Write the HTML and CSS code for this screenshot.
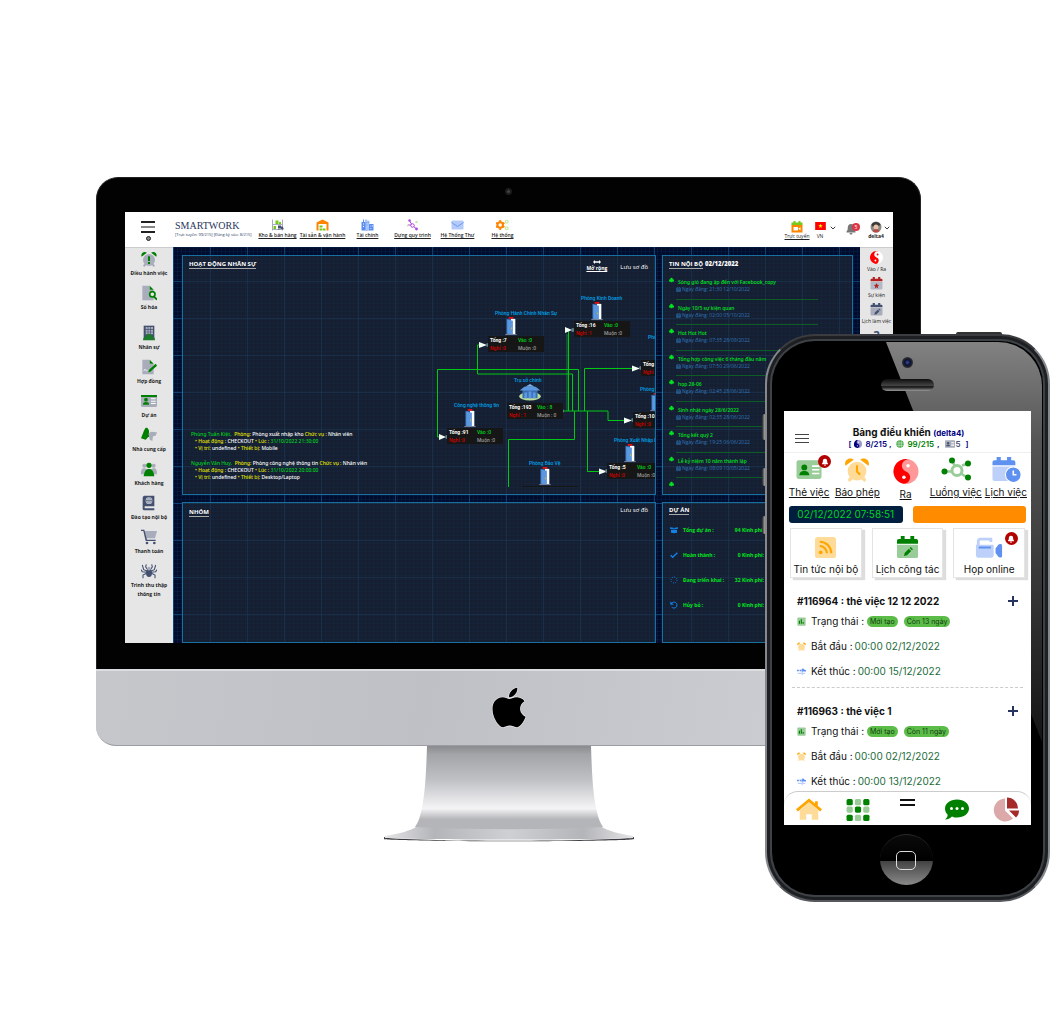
FILE: index.html
```html
<!DOCTYPE html>
<html lang="vi">
<head>
<meta charset="utf-8">
<meta name="viewport" content="width=device-width, initial-scale=1">
<title>Smartwork</title>
<link rel="stylesheet" href="styles.css">
</head>
<body>
<svg class="sprite" aria-hidden="true">
  <symbol id="i-alarm" viewBox="0 0 24 24"><circle class="alt" cx="12" cy="13.5" r="9"/><path class="alt" d="M5 19l3 2-3 3-2-2zM19 19l-3 2 3 3 2-2z"/><path d="M1 8.500C-.5 5 2 1.500 5.500 1.500c1.500 0 2.500.5 3.300 1.200zM23 8.500C24.500 5 22 1.500 18.500 1.500c-1.500 0-2.500.5-3.300 1.200z"/></symbol>
  <symbol id="i-file" viewBox="0 0 24 24"><path class="alt" d="M2 1h11v6h6v16H2z"/><path d="M13 1l6 6h-6z"/></symbol>
  <symbol id="i-build" viewBox="0 0 24 24"><path class="alt" d="M4 1h16v21H4z"/><path fill="#a9adbb" d="M7 3h3v3H7zM11 3h3v3h-3zM15 3h3v3h-3zM7 7h3v3H7zM11 7h3v3h-3zM15 7h3v3h-3zM7 11h3v3H7zM11 11h3v3h-3zM15 11h3v3h-3z"/><path d="M3 23c0-4 3-6 5-6a4 4 0 0 1 8 0c3 0 5 2 5 6z"/></symbol>
  <symbol id="i-card" viewBox="0 0 24 24"><rect class="alt" y="3" width="24" height="18" rx="2"/><circle cx="7.500" cy="10" r="2.800"/><path d="M2.800 17.500c0-3 2-4 4.700-4s4.700 1 4.700 4z"/><path fill="#fff" d="M15 8h7v1.500h-7zM15 11.500h7V13h-7zM15 15h7v1.500h-7z"/></symbol>
  <symbol id="i-people" viewBox="0 0 24 24"><circle class="alt" cx="5" cy="7" r="3"/><circle class="alt" cx="19" cy="7" r="3"/><path class="alt" d="M0 20c0-6 1-9 5-9s5 3 5 9zM14 20c0-6 1-9 5-9s5 3 5 9z"/><circle cx="12" cy="6.500" r="4"/><path d="M4 23c1-7 3-11 8-11s7 4 8 11z"/></symbol>
  <symbol id="i-hands" viewBox="0 0 24 24"><path d="M0 17L5 4l4-3 3 4v9l-5 5z"/><path class="alt" d="M11 10l4-3 9 1-2 5-4 1-1 7-4-2-1-6z"/><circle cx="8" cy="3" r="2"/></symbol>
  <symbol id="i-book" viewBox="0 0 24 24"><path d="M5 1h15v16H5.500v3H20v3H5a2.500 2.500 0 0 1-2.500-2.500V4A3 3 0 0 1 5 1z"/><circle cx="12" cy="8.500" r="5" fill="#dfe2e8"/><path fill="none" stroke="#435070" d="M7 8.500h10M12 3.500v10M9.500 4.500c-1 3-1 5 0 8M14.500 4.500c1 3 1 5 0 8"/></symbol>
  <symbol id="i-cart" viewBox="0 0 24 24"><path class="alt" d="M5 3h19l-3 11H8z"/><path d="M0 1h5l4 15h13v2H7L3.500 3H0z"/><circle cx="9" cy="21" r="2"/><circle cx="20" cy="21" r="2"/></symbol>
  <symbol id="i-spider" viewBox="0 0 24 24"><path fill="none" stroke="currentColor" stroke-width="1.600" d="M9 12L4 10 2 3M15 12l5-2 2-7M9 14l-7-1-2-3M15 14l7-1 2-3M9 15l-6 3v5M15 15l6 3v5M10 10L7 6l1-4M14 10l3-4-1-4"/><ellipse cx="12" cy="15" rx="4.500" ry="6"/><circle class="alt" cx="12" cy="8.500" r="2.700"/></symbol>
  <symbol id="i-yin" viewBox="0 0 24 24"><circle class="alt" cx="12" cy="12" r="12"/><path d="M12 0a12 12 0 1 0 0 24 6 6 0 0 0 0-12 6 6 0 0 1 0-12z" transform="rotate(20 12 12)"/><circle cx="14" cy="6.500" r="1.700" fill="var(--hole,#fff)"/><circle cx="10" cy="17.500" r="1.700" fill="#fff"/></symbol>
  <symbol id="i-cal" viewBox="0 0 24 24"><path class="alt" d="M1 9h22v12a2 2 0 0 1-2 2H3a2 2 0 0 1-2-2z"/><path d="M1 8V5a2 2 0 0 1 2-2h2V0h4v3h6V0h4v3h2a2 2 0 0 1 2 2v3z"/></symbol>
  <symbol id="i-pen" viewBox="0 0 24 24"><path d="M6 22l1.500-6 8-8 4.500 4.500-8 8zM17 6.500l2-2 4.500 4.500-2 2z"/></symbol>
  <symbol id="i-star" viewBox="0 0 24 24"><path d="M12 2l3 7 7 .5-5.500 4.700L18.500 22 12 18l-6.500 4 2-7.800L2 9.500 9 9z"/></symbol>
  <symbol id="i-bell" viewBox="0 0 24 24"><path d="M12 2c5 0 6.500 4 6.500 8 0 4 1 5 2.500 7v2H3v-2c1.500-2 2.500-3 2.500-7 0-4 1.500-8 6.500-8zM9 20h6a3 3 0 0 1-6 0z"/></symbol>
  <symbol id="i-chev" viewBox="0 0 24 24"><path fill="none" stroke="currentColor" stroke-width="3.500" d="M3 7l9 9 9-9"/></symbol>
  <symbol id="i-club" viewBox="0 0 24 24"><circle cx="12" cy="7" r="6"/><circle cx="6" cy="14" r="6"/><circle cx="18" cy="14" r="6"/><path d="M10 12h4l2 11H8z"/></symbol>
  <symbol id="i-calo" viewBox="0 0 24 24"><path fill="none" stroke="currentColor" stroke-width="2.500" d="M2 5h20v17H2zM2 10h20M7 1v5M17 1v5M8.500 10v12M15.500 10v12M2 16h20"/></symbol>
  <symbol id="i-net" viewBox="0 0 30 24"><path class="altline" fill="none" stroke-width="2.500" d="M11 3l3 6M21 8l6-2M20 16l6 4M11 14H4"/><circle class="altline" fill="none" stroke-width="3" cx="16" cy="13" r="5"/><circle cx="11" cy="3" r="3"/><circle cx="27" cy="6" r="3"/><circle cx="27" cy="20" r="3"/><circle cx="3.500" cy="14" r="3"/></symbol>
  <symbol id="i-door" viewBox="0 0 12 20"><path fill="#e10f0f" d="M3.500 0h5v2h-5z"/><path fill="#2f5f9c" d="M1 2h9.500v16H1z"/><path fill="#fff" d="M6 2h4.500v16H6z"/><path fill="#5c98df" d="M2 2.500l6 1.500v14.500l-6-1z"/><path fill="#d8b43a" d="M6 11h1v2H6z"/><path fill="#7f8aa0" d="M0 18h12v1H0z"/></symbol>
  <symbol id="i-house" viewBox="0 0 24 18"><ellipse cx="12" cy="13" rx="11.500" ry="4.500" fill="#b9dc9a"/><path fill="#3a6db0" d="M4 6h16v9H4z"/><path fill="#5c98df" d="M1 7l5-4h12l5 4zM6 9h3v6H6zM10.500 8h3v7h-3zM15 9h3v6h-3z"/><path fill="#79aee8" d="M7 3l5-3 5 3z"/></symbol>
  <symbol id="i-shelf" viewBox="0 0 24 24"><path fill="none" stroke="#a9adbb" stroke-width="2" d="M2 1v22M22 1v22M1 11h22M1 21h15"/><path fill="#76c81c" d="M8 3h6v7H8zM4 14h5v6H4zM15 6h4v4h-4z"/><path fill="#435070" d="M13 13h6v6h-6zM19 15h3l2 3v3H13v-1h6z"/></symbol>
  <symbol id="i-ware" viewBox="0 0 24 24"><path fill="#ff8400" d="M0 7l12-6 12 6v16h-4V10H4v13H0z"/><path fill="#76c81c" d="M6 13h6v4H6zM6 19h6v4H6zM13 19h5v4h-5z"/></symbol>
  <symbol id="i-city" viewBox="0 0 24 24"><path fill="#5b8def" d="M0 6h3V1h2v5h3V1h2v5h4v17H0z"/><path fill="#a9c5fb" d="M8 3h8v20H8z"/><path fill="#5b8def" d="M15 10h9v13h-9zM10 6h1.500v2H10zM13 6h1.500v2H13zM10 11h1.500v2H10z"/><path fill="#fff" d="M3 9h2v2H3zM3 14h2v2H3zM18 13h1.500v2H18zM21 13h1.500v2H21zM18 18h1.500v2H18z"/></symbol>
  <symbol id="i-flow" viewBox="0 0 24 24"><path fill="none" stroke="#b146e0" stroke-width="2" d="M6 3l5 9 9 8M11 12H3"/><circle cx="6" cy="3" r="2.500" fill="#b146e0"/><circle cx="12" cy="13" r="3.500" fill="#fff" stroke="#b146e0" stroke-width="2"/><circle cx="20" cy="20" r="2.800" fill="#b146e0"/><circle cx="2.500" cy="13" r="2" fill="#c4e8a5"/><circle cx="20" cy="6" r="2.500" fill="#c4e8a5"/></symbol>
  <symbol id="i-mail" viewBox="0 0 24 24"><rect y="3" width="24" height="18" rx="2" fill="#b4cbfa"/><path fill="none" stroke="#6d9af4" stroke-width="2" d="M0 7l12 8 12-8"/></symbol>
  <symbol id="i-gear" viewBox="0 0 28 24"><circle cx="9" cy="12" r="6" fill="none" stroke="#ff8400" stroke-width="4.500"/><path stroke="#ff8400" stroke-width="4" d="M9 1v4M9 19v4M0 7l3 2M18 7l-3 2M0 17l3-2M18 17l-3-2"/><g fill="none" stroke="#c4e8a5" stroke-width="2.500"><circle cx="23" cy="5" r="3"/><circle cx="23" cy="19" r="3"/></g></symbol>
  <symbol id="i-box" viewBox="0 0 24 24"><path d="M0 4l10 1 2 3 2-3 10-1v4l-9 2-3-2-3 2-9-2zM3 11l6 1 3-2 3 2 6-1v9l-9 2-9-2z"/></symbol>
</svg>

<main class="stage">
  <section class="monitor" aria-label="Smartwork desktop">
    <div class="bezel">
      <span class="webcam"></span>
      <div class="screen">
        <header class="topbar">
          <button class="burger" aria-label="Menu"><i></i><i></i><i></i><b></b></button>
          <div class="brand"><strong>SMARTWORK</strong><small>[Trực tuyến: 99/215] [Đăng ký vào: 8/215]</small></div>
          <nav class="topnav">
            <a href="#"><svg><use href="#i-shelf"/></svg>Kho &amp; bán hàng</a>
            <a href="#"><svg><use href="#i-ware"/></svg>Tài sản &amp; vận hành</a>
            <a href="#"><svg><use href="#i-city"/></svg>Tài chính</a>
            <a href="#"><svg><use href="#i-flow"/></svg>Dựng quy trình</a>
            <a href="#"><svg><use href="#i-mail"/></svg>Hệ Thống Thư</a>
            <a href="#"><svg><use href="#i-gear"/></svg>Hệ thống</a>
          </nav>
          <div class="tools">
            <a class="tool online" href="#"><svg viewBox="0 0 24 24"><path fill="#76c81c" d="M1 9V3h4V0h4v3h6V0h4v3h4v6z"/><path fill="#ff8400" d="M1 8h22v15H1z"/><path fill="#fff" d="M5 12h9v7H5zM15 15l4-3v7l-4-3z"/></svg>Trực tuyến</a>
            <div class="tool flag"><svg viewBox="0 0 24 18"><path fill="#f00" d="M0 0h24v18H0z"/><path fill="#ff0" d="M12 4l1.300 3.500H17l-3 2.300 1.100 3.700-3.100-2.200-3.100 2.200L10 9.800 7 7.500h3.700z"/></svg>VN</div>
            <svg class="chev"><use href="#i-chev"/></svg>
            <div class="alerts"><svg><use href="#i-bell"/></svg><span>5</span></div>
            <div class="tool user"><svg viewBox="0 0 24 24"><circle cx="12" cy="12" r="11" fill="#8c8984"/><path fill="#3b3937" d="M3 8c2-8 16-8 18 0l-4 2-5-2-6 4z"/><circle cx="12" cy="12" r="5" fill="#e6c3a8"/><path fill="#b84b45" d="M5 20c2-5 12-5 14 0-4 4-10 4-14 0z"/></svg>delta4</div>
            <svg class="chev"><use href="#i-chev"/></svg>
          </div>
        </header>

        <div class="workspace">
          <nav class="rail left">
            <a href="#"><svg viewBox="0 0 24 24"><use href="#i-alarm"/><path d="M10.500 8h3v7h-3zM10.500 16.500h3v3h-3z"/></svg>Điều hành việc</a>
            <a href="#"><svg viewBox="0 0 24 24"><use href="#i-file"/><circle cx="17" cy="14" r="4" fill="#e6e6e6" stroke="currentColor" stroke-width="2.500"/><path stroke="currentColor" stroke-width="3" d="M19 17l5 5"/></svg>Số hóa</a>
            <a class="apart navy" href="#"><svg><use href="#i-build"/></svg>Nhân sự</a>
            <a href="#"><svg viewBox="0 0 24 24"><use href="#i-file"/><path d="M11 20l1-4 10-9 2 3-10 9z"/><path stroke="#fff" fill="none" d="M4 18l2-3 2 3 2-1"/></svg>Hợp đồng</a>
            <a href="#"><svg viewBox="0 0 24 24"><use href="#i-card"/><path d="M0 3h24v3H0z"/></svg>Dự án</a>
            <a href="#"><svg><use href="#i-hands"/></svg>Nhà cung cấp</a>
            <a href="#"><svg><use href="#i-people"/></svg>Khách hàng</a>
            <a class="slate" href="#"><svg><use href="#i-book"/></svg>Đào tạo nội bộ</a>
            <a class="slate" href="#"><svg><use href="#i-cart"/></svg>Thanh toán</a>
            <a class="slate" href="#"><svg><use href="#i-spider"/></svg>Trình thu thập thông tin</a>
          </nav>

          <div class="board">
            <section class="panel staff">
              <header><h2>HOẠT ĐỘNG NHÂN SỰ</h2><a class="expand" href="#"><svg viewBox="0 0 24 12"><path d="M0 6l6-6v4h12V0l6 6-6 6V8H6v4z"/></svg>Mở rộng</a><button class="save">Lưu sơ đồ</button></header>
              <div class="canvas">
                <svg class="wires" viewBox="0 0 472 231">
                  <g fill="none" stroke="#00c814" stroke-width="1"><path d="M379.500 155H425V164.500h17M385.500 155V74.500M296 89h-1.500v29H389.500V155M256 181h-1.500v-67.500H395.500V155M450 112.500h-48.500V155M417 215.500h-12.500V155M391.500 155v28.500H325.500V231"/><path d="M384 155V78" opacity=".6"/></g>
                  <path fill="#f2fff2" d="M382 71l7 3-7 3zM296 86l8 3-8 3zM256 178l7 3-7 3zM449 109.500l8 3-8 3zM441 161.500l8 3-8 3zM416 212.500l8 3-8 3z"/>
                  <g fill="#5f7f8c"><circle cx="379" cy="155" r="2"/><circle cx="390" cy="74" r="2"/><circle cx="305" cy="89" r="2"/><circle cx="264" cy="181" r="2"/><circle cx="458" cy="112" r="2"/><circle cx="450" cy="164" r="2"/><circle cx="424" cy="215" r="2"/></g>
                </svg>
                <div class="node n-hr"><h3>Phòng Hành Chính Nhân Sự</h3><svg><use href="#i-door"/></svg><p><b>Tổng :7</b><i>Vào :0</i><em>Nghỉ :0</em><span>Muộn :0</span></p></div>
                <div class="node n-sales"><h3>Phòng Kinh Doanh</h3><svg><use href="#i-door"/></svg><p><b>Tổng :16</b><i>Vào :0</i><em>Nghỉ :1</em><span>Muộn :0</span></p></div>
                <div class="node n-account"><h3>Phòng</h3><svg><use href="#i-door"/></svg><p><b>Tổng :9</b><i></i><em>Nghỉ :0</em></p></div>
                <div class="node n-root"><h3>Trụ sở chính</h3><svg class="house"><use href="#i-house"/></svg><p><b>Tổng :193</b><i>Vào : 8</i><em>Nghỉ : 1</em><span>Muộn : 0</span></p></div>
                <div class="node n-tech"><h3>Phòng</h3><svg><use href="#i-door"/></svg><p><b>Tổng :10</b><i></i><em>Nghỉ :0</em></p></div>
                <div class="node n-it"><h3>Công nghệ thông tin</h3><svg><use href="#i-door"/></svg><p><b>Tổng :91</b><i>Vào :0</i><em>Nghỉ :0</em><span>Muộn :0</span></p></div>
                <div class="node n-guard"><h3>Phòng Bảo Vệ</h3><svg><use href="#i-door"/></svg><p></p></div>
                <div class="node n-trade"><h3>Phòng Xuất Nhập Khẩu</h3><svg><use href="#i-door"/></svg><p><b>Tổng :5</b><i>Vào :0</i><em>Nghỉ :0</em><span>Muộn :0</span></p></div>
              </div>
              <div class="log">
                <div><p><i>Phùng Tuấn Kiệt,</i>&nbsp; <b>Phòng:</b> Phòng xuất nhập kho <b>Chức vụ :</b> Nhân viên</p><p><b>• Hoạt động :</b> CHECKOUT <b>• Lúc :</b> <i>31/10/2022 21:30:00</i></p><p><b>• Vị trí:</b> undefined <b>• Thiết bị:</b> Mobile</p></div>
                <div><p><i>Nguyễn Văn Huy,</i>&nbsp; <b>Phòng:</b> Phòng công nghệ thông tin <b>Chức vụ :</b> Nhân viên</p><p><b>• Hoạt động :</b> CHECKOUT <b>• Lúc :</b> <i>31/10/2022 20:00:00</i></p><p><b>• Vị trí:</b> undefined <b>• Thiết bị:</b> Desktop/Laptop</p></div>
              </div>
            </section>

            <section class="panel news">
              <header><h2>TIN NỘI BỘ</h2><strong>02/12/2022</strong></header>
              <ul>
                <li><svg><use href="#i-club"/></svg><div><a href="#">Sóng gió đang ập đến với Facebook_copy</a><time><svg><use href="#i-calo"/></svg>Ngày đăng: 21:30 12/10/2022</time></div></li>
                <li><svg><use href="#i-club"/></svg><div><a href="#">Ngày 10/5 sự kiện quan</a><time><svg><use href="#i-calo"/></svg>Ngày đăng: 02:00 05/10/2022</time></div></li>
                <li><svg><use href="#i-club"/></svg><div><a href="#">Hot Hot Hot</a><time><svg><use href="#i-calo"/></svg>Ngày đăng: 07:35 28/09/2022</time></div></li>
                <li><svg><use href="#i-club"/></svg><div><a href="#">Tổng hợp công việc 6 tháng đầu năm</a><time><svg><use href="#i-calo"/></svg>Ngày đăng: 07:50 29/06/2022</time></div></li>
                <li><svg><use href="#i-club"/></svg><div><a href="#">họp 28-06</a><time><svg><use href="#i-calo"/></svg>Ngày đăng: 02:45 28/06/2022</time></div></li>
                <li><svg><use href="#i-club"/></svg><div><a href="#">Sinh nhật ngày 28/6/2022</a><time><svg><use href="#i-calo"/></svg>Ngày đăng: 02:35 28/06/2022</time></div></li>
                <li><svg><use href="#i-club"/></svg><div><a href="#">Tổng kết quý 2</a><time><svg><use href="#i-calo"/></svg>Ngày đăng: 19:25 06/06/2022</time></div></li>
                <li><svg><use href="#i-club"/></svg><div><a href="#">Lễ kỷ niệm 10 năm thành lập</a><time><svg><use href="#i-calo"/></svg>Ngày đăng: 08:09 10/05/2022</time></div></li>
                <li><svg><use href="#i-club"/></svg></li>
              </ul>
            </section>

            <section class="panel group">
              <header><h2>NHÓM</h2><button class="save">Lưu sơ đồ</button></header>
            </section>

            <section class="panel projects">
              <header><h2>DỰ ÁN</h2></header>
              <dl>
                <div><svg><use href="#i-box"/></svg><dt>Tổng dự án :</dt><dd>94 Kinh phí:</dd></div>
                <div><svg viewBox="0 0 24 24"><path fill="none" stroke="currentColor" stroke-width="4" d="M2 13l6 6L22 5"/></svg><dt>Hoàn thành :</dt><dd>0 Kinh phí:</dd></div>
                <div><svg viewBox="0 0 24 24"><circle cx="12" cy="12" r="9" fill="none" stroke="currentColor" stroke-width="3" stroke-dasharray="3 4"/></svg><dt>Đang triển khai :</dt><dd>32 Kinh phí:</dd></div>
                <div><svg viewBox="0 0 24 24"><path fill="none" stroke="currentColor" stroke-width="3" d="M4 8a9 9 0 1 1 1 10"/><path d="M1 1v10h10z"/></svg><dt>Hủy bỏ :</dt><dd>0 Kinh phí:</dd></div>
              </dl>
            </section>
          </div>

          <nav class="rail right">
            <a class="red" href="#"><svg><use href="#i-yin"/></svg>Vào / Ra</a>
            <a class="crimson" href="#"><svg viewBox="0 0 24 24"><use href="#i-cal"/><use href="#i-star" x="6" y="10" width="12" height="12"/></svg>Sự kiện</a>
            <a class="slate" href="#"><svg viewBox="0 0 24 24"><use href="#i-cal"/><use href="#i-pen" x="4" y="7" width="16" height="16"/></svg>Lịch làm việc</a>
            <a class="help" href="#">?</a>
          </nav>
        </div>
      </div>
    </div>
    <div class="chin">
      <svg viewBox="0 0 384 512"><path d="M318.700 268.700c-.2-36.700 16.400-64.400 50-84.800-18.800-26.900-47.200-41.700-84.700-44.600-35.500-2.800-74.300 20.700-88.500 20.700-15 0-49.400-19.700-76.400-19.700C63.300 141.200 4 184.800 4 273.500q0 39.300 14.400 81.200c12.800 36.700 59 126.700 107.200 125.200 25.200-.6 43-17.900 75.800-17.900 31.800 0 48.300 17.900 76.400 17.900 48.600-.7 90.400-82.500 102.600-119.300-65.200-30.700-61.700-90-61.700-91.900zm-56.600-164.200c27.300-32.400 24.800-61.900 24-72.500-24.100 1.400-52 16.400-67.900 34.900-17.500 19.800-27.800 44.300-25.600 71.900 26.100 2 49.900-11.400 69.500-34.300z"/></svg>
    </div>
    <svg class="stand" viewBox="0 0 252 96">
      <defs>
        <linearGradient id="neck" x1="0" y1="0" x2="0" y2="1"><stop offset="0" stop-color="#8a8b8f"/><stop offset=".1" stop-color="#a3a4a8"/><stop offset=".4" stop-color="#bfc0c4"/><stop offset=".75" stop-color="#f4f4f6"/><stop offset=".88" stop-color="#b4b5b8"/><stop offset="1" stop-color="#b4b5b9"/></linearGradient>
        <linearGradient id="foot"><stop offset="0" stop-color="#e4e4e6"/><stop offset=".2" stop-color="#b4b5b9"/><stop offset=".5" stop-color="#cfd0d3"/><stop offset=".8" stop-color="#b4b5b9"/><stop offset="1" stop-color="#e4e4e6"/></linearGradient>
      </defs>
      <path fill="#3c3d40" d="M1 91c20 5 230 5 250 0v2c-6 3-244 3-250 0z"/>
      <path fill="url(#foot)" d="M35 80h182c8 5 20 8 33 10v2c-20 2-230 2-248 0v-2c13-2 25-5 33-10z"/>
      <path fill="url(#neck)" d="M44 0h164c1 30 2 52 7 70 1 4 3 8 5 11-60 3-128 3-188 0 2-3 4-7 5-11 5-18 6-40 7-70z"/>
    </svg>
  </section>

  <section class="phone" aria-label="Smartwork mobile">
    <i class="side s1"></i><i class="side s2"></i><i class="side s3"></i><i class="power"></i>
    <div class="shell">
      <div class="speaker"><i></i><b></b></div>
      <div class="app">
        <header class="apphead">
          <button class="menu" aria-label="Menu"><i></i><i></i><i></i></button>
          <div><h1>Bảng điều khiển <small>(delta4)</small></h1>
          <p>[ <svg class="yin"><use href="#i-yin"/></svg> 8/215 , &nbsp;<span><svg viewBox="0 0 24 24"><circle cx="12" cy="12" r="11" fill="#3ca53c"/><path fill="none" stroke="#d4ecd4" stroke-width="2" d="M1 9h22M1 16h22M9 1v22M16 1v22"/></svg> 99/215</span> , &nbsp;<svg class="id"><use href="#i-card"/></svg> <b>5</b> &nbsp;]</p></div>
        </header>
        <nav class="quick">
          <a class="green" href="#"><svg><use href="#i-card"/></svg><span class="badge"><svg><use href="#i-bell"/></svg></span>Thẻ việc</a>
          <a class="amber" href="#"><svg viewBox="0 0 24 24"><use href="#i-alarm"/><path fill="none" stroke="currentColor" stroke-width="2" d="M12 8v6l3 3"/></svg>Báo phép</a>
          <a class="red low" href="#"><svg><use href="#i-yin"/></svg>Ra</a>
          <a class="green" href="#"><svg class="wide"><use href="#i-net"/></svg>Luồng việc</a>
          <a class="blue" href="#"><svg class="wide" viewBox="0 0 28 24"><use href="#i-cal" width="24" height="24"/><circle cx="21" cy="17" r="7.500" stroke="#fff"/><path fill="none" stroke="#fff" stroke-width="1.500" d="M21 13v4h3"/></svg>Lịch việc</a>
        </nav>
        <div class="status"><button class="clock">02/12/2022 07:58:51</button><button class="orange" aria-label="Chấm công"></button></div>
        <div class="tiles">
          <button class="amber"><svg viewBox="0 0 24 24"><rect class="alt" x="1" y="1" width="22" height="22" rx="3"/><circle cx="7" cy="17" r="2"/><path fill="none" stroke="currentColor" stroke-width="2.200" d="M6 10.500a7.500 7.500 0 0 1 7.500 7.500M6 6a12 12 0 0 1 12 12"/></svg>Tin tức nội bộ</button>
          <button class="green"><svg viewBox="0 0 24 24"><use href="#i-cal"/><use href="#i-pen" x="5" y="9" width="13" height="13"/></svg>Lịch công tác</button>
          <button class="blue"><svg class="wide" viewBox="0 0 30 24"><path class="alt" d="M1 9h18a1 1 0 0 1 1 1v10a3 3 0 0 1-3 3H4a3 3 0 0 1-3-3z"/><path class="altline" fill="none" stroke-width="3" d="M3.500 10V5a2 2 0 0 1 2-2H17v3"/><path d="M22 13l3-4c1-1 4-1 4 1v11c0 2-3 2-4 1l-3-4zM4 11h13v2H4z"/></svg><span class="badge"><svg><use href="#i-bell"/></svg></span>Họp online</button>
        </div>
        <div class="tasks">
          <article>
            <header><h2>#116964 : thẻ việc 12 12 2022</h2><button aria-label="Thêm"></button></header>
            <p class="state"><svg class="green" viewBox="0 0 24 24"><rect class="alt" x="1" y="1" width="22" height="22" rx="2"/><path d="M5 10h3v8H5zM10 6h3v12h-3zM15 13h3v5h-3z"/></svg>Trạng thái : <mark>Mới tạo</mark><mark>Còn 13 ngày</mark></p>
            <p><svg class="amber"><use href="#i-alarm"/></svg>Bắt đầu : <time>00:00 02/12/2022</time></p>
            <p><svg class="blue" viewBox="0 0 24 24"><path class="altline" fill="none" stroke-width="3" d="M2 17h20M14 4v18"/><path d="M0 7h5v4H0zM7 7h4v4H7zM12 8l4-5 5 5h3v4H12z"/></svg>Kết thúc : <time>00:00 15/12/2022</time></p>
          </article>
          <article>
            <header><h2>#116963 : thẻ việc 1</h2><button aria-label="Thêm"></button></header>
            <p class="state"><svg class="green" viewBox="0 0 24 24"><rect class="alt" x="1" y="1" width="22" height="22" rx="2"/><path d="M5 10h3v8H5zM10 6h3v12h-3zM15 13h3v5h-3z"/></svg>Trạng thái : <mark>Mới tạo</mark><mark>Còn 11 ngày</mark></p>
            <p><svg class="amber"><use href="#i-alarm"/></svg>Bắt đầu : <time>00:00 02/12/2022</time></p>
            <p><svg class="blue" viewBox="0 0 24 24"><path class="altline" fill="none" stroke-width="3" d="M2 17h20M14 4v18"/><path d="M0 7h5v4H0zM7 7h4v4H7zM12 8l4-5 5 5h3v4H12z"/></svg>Kết thúc : <time>00:00 13/12/2022</time></p>
          </article>
        </div>
        <nav class="dock">
          <a class="amber" href="#" aria-label="Trang chủ"><svg viewBox="0 0 28 24"><path class="alt" d="M4 13l10-9 10 9v10h-7v-6h-6v6H4z"/><path fill="none" stroke="currentColor" stroke-width="3" d="M1 13L14 2l13 11M22 3v6"/></svg></a>
          <a class="green" href="#" aria-label="Ứng dụng"><svg viewBox="0 0 24 24"><g><rect x="1" y="2" width="6" height="6" rx="1.500"/><rect x="17" y="2" width="6" height="6" rx="1.500"/><rect x="9" y="9" width="6" height="6" rx="1.500"/><rect x="1" y="17" width="6" height="6" rx="1.500"/><rect x="17" y="17" width="6" height="6" rx="1.500"/></g><g class="alt"><rect x="9" y="2" width="6" height="6" rx="1.500"/><rect x="1" y="9" width="6" height="6" rx="1.500"/><rect x="17" y="9" width="6" height="6" rx="1.500"/><rect x="9" y="17" width="6" height="6" rx="1.500"/></g></svg></a>
          <a class="grip" href="#" aria-label="Mở rộng"><i></i></a>
          <a class="green" href="#" aria-label="Tin nhắn"><svg viewBox="0 0 26 24"><path d="M13 2c7 0 12 4 12 9s-5 9-12 9c-2 0-3 0-5-1-2 2-4 3-7 3 2-2 3-3 2.500-5C2 15.500 1 13.500 1 11c0-5 5-9 12-9z"/><g fill="#fff"><circle cx="7.500" cy="11" r="1.500"/><circle cx="13" cy="11" r="1.500"/><circle cx="18.500" cy="11" r="1.500"/></g></svg></a>
          <a class="brown" href="#" aria-label="Thống kê"><svg viewBox="0 0 26 24"><path class="alt" d="M12 1v12l8 8A11.500 11.500 0 1 1 12 1z"/><path d="M14 0a11 11 0 0 1 11 11H14zM16 13h10c0 3-1 5-3 7z"/></svg></a>
        </nav>
      </div>
      <div class="homekey"><i></i></div>
    </div>
  </section>
</main>
</body>
</html>
```
FILE: styles.css
```css
* { box-sizing: border-box; margin: 0; padding: 0; }
body { background: #fff; font-family: "Open Sans", "Noto Sans", sans-serif; color: #222; }
a { color: inherit; text-decoration: none; }
button { border: 0; background: none; font: inherit; color: inherit; cursor: pointer; }
svg { display: block; fill: currentColor; flex: none; }
ul { list-style: none; }
i, em { font-style: normal; }
.sprite { position: absolute; width: 0; height: 0; }
.alt { fill: var(--alt); }
.altline { stroke: var(--alt); }

.green { --alt: #99cc99; --ink: #008000; }
.amber { --alt: #ffdb99; --ink: #ffa500; }
.red { --alt: #ff9999; --ink: #ff0000; }
.blue { --alt: #bdd0fa; --ink: #5f91f0; }
.brown { --alt: #dba9a9; --ink: #a52a2a; }
.crimson { --alt: #b4b9c6; --ink: #b22222; }
.navy { --alt: #435070; --ink: #1b7a2b; }
.slate { --alt: #a9adbb; --ink: #435070; }

.stage {
  display: grid;
  grid-template-columns: 96px minmax(0, 1fr) 156px 129px 7px;
  align-items: start;
  min-height: 100vh;
  padding-top: 177px;
}
.monitor { grid-column: 2 / 4; grid-row: 1; }
.phone { grid-column: 3 / 5; grid-row: 1; margin-top: 157px; position: relative; }

/* Monitor body */
.bezel { position: relative; padding: 34px 27px 26px 28px; border: 1px solid #222; border-bottom: 0; border-radius: 22px 22px 0 0; background: #020202; }
.webcam { position: absolute; top: 10px; left: 50%; width: 7px; height: 7px; margin-left: -4px; border-radius: 50%; background: #444; border: 2px solid #1c1c1c; }
.screen { background: #fff; aspect-ratio: 768 / 431; overflow: hidden; display: flex; flex-direction: column; }
.chin { height: 77px; border-radius: 0 0 20px 20px; background: linear-gradient(100deg, #c6c7cb, #bfc0c5 40%, #d0d1d5); border-top: 2px solid #dcdde0; border-bottom: 1px solid #9c9da2; display: flex; justify-content: center; padding-top: 14px; }
.chin svg { width: 34px; height: 45px; color: #000; stroke: #f2f2f4; stroke-width: 14; paint-order: stroke; }
.stand { width: 252px; height: 96px; margin: 0 auto; }

/* Desktop top bar */
.topbar { display: grid; grid-template-columns: 50px 80px 1fr auto; height: 35px; flex: none; align-items: start; padding-top: 7px; }
.burger { display: flex; flex-direction: column; align-items: center; gap: 3px; padding: 2px 4px 0 0; }
.burger i { width: 14px; height: 2px; background: #222; }
.burger i:nth-child(2) { background: #888; }
.burger b { width: 5px; height: 5px; border: 1px solid #222; border-radius: 50%; background: #888; }
.brand strong { display: block; font: 10px/13px "Liberation Serif", serif; color: #27365c; }
.brand small { display: block; font-size: 4px; line-height: 6px; white-space: nowrap; color: #27365c; }
.topnav { display: grid; grid-template-columns: repeat(6, 45px); }
.topnav a { display: flex; flex-direction: column; align-items: center; gap: 1px; font-size: 5px; font-weight: 600; line-height: 7px; white-space: nowrap; text-decoration: underline; }
.topnav svg { width: 13px; height: 12px; }
.tools { display: flex; align-items: flex-start; padding-right: 3px; }
.tool { display: flex; flex-direction: column; align-items: center; font-size: 5px; line-height: 6px; }
.online { width: 26px; text-decoration: underline; padding-top: 2px; }
.online svg { width: 12px; height: 12px; }
.flag { width: 20px; padding-top: 3px; gap: 3px; }
.flag svg { width: 11px; height: 8px; }
.chev { width: 6px; height: 6px; margin-top: 6px; }
.alerts { display: flex; width: 31px; padding: 4px 0 0 9px; color: #777; }
.alerts svg { width: 12px; height: 12px; }
.alerts span { width: 8px; height: 8px; margin-left: -5px; border-radius: 50%; background: #dc3545; color: #fff; font-size: 5px; line-height: 8px; text-align: center; }
.user { width: 18px; padding-top: 2px; font-weight: 700; }
.user svg { width: 12px; height: 12px; }
.user + .chev { margin-left: -1px; }

/* Desktop work area */
.workspace { display: grid; grid-template-columns: 48px minmax(0, 1fr) 33px; flex: 1; min-height: 0; }
.rail { background: #e6e6e6; display: flex; flex-direction: column; align-items: center; border-top: 1px solid #ccc; }
.rail a { display: flex; flex-direction: column; align-items: center; text-align: center; font-size: 5px; line-height: 9px; }
.rail svg { color: var(--ink); }
.left { --alt: #a9adbb; --ink: #008000; gap: 7px; padding-top: 3px; }
.left a { font-weight: 700; gap: 2px; width: 46px; }
.left svg { width: 16px; height: 16px; }
.left .apart { padding-top: 6px; }
.right { gap: 3px; padding-top: 3px; }
.right a { white-space: nowrap; gap: 1px; }
.right svg { width: 13px; height: 13px; }
.right .red { --alt: #fff; --hole: #f00; }
.right .help { font-size: 12px; font-weight: 700; line-height: 14px; color: #435070; }

.board {
  display: grid;
  grid-template-columns: minmax(0, 1fr) 191px;
  grid-template-rows: 240px minmax(0, 1fr);
  gap: 7px 6px;
  padding: 8px 7px 0 9px;
  background-color: #010b2b;
  background-image:
    linear-gradient(rgba(20, 110, 175, .5) 1px, transparent 1px),
    linear-gradient(90deg, rgba(20, 110, 175, .5) 1px, transparent 1px),
    linear-gradient(rgba(20, 110, 175, .1) 1px, transparent 1px),
    linear-gradient(90deg, rgba(20, 110, 175, .1) 1px, transparent 1px);
  background-size: 37px 37px, 37px 37px, 4px 4px, 4px 4px;
  background-position: 0 34px, 37px 0, 0 0, 0 0;
}
.panel { position: relative; overflow: hidden; border: 1px solid #17709f; background: rgba(32, 40, 54, .7); color: #fff; display: flex; flex-direction: column; }
.panel > header { display: flex; align-items: flex-start; padding: 4px 7px 0 6px; font-size: 6px; line-height: 8px; font-weight: 700; }
.panel h2 { font-size: 6px; line-height: 8px; font-weight: 700; border-bottom: 1px solid #aaa; }
.panel strong { margin-left: 2px; }
.save { margin-left: auto; font-size: 6px; line-height: 8px; font-weight: 400; }
.staff .save { margin: 3px 0 0 13px; }
.staff .expand { margin-left: auto; font-size: 5px; line-height: 6px; text-decoration: underline; display: flex; flex-direction: column; align-items: center; gap: 1px; }
.staff .expand svg { width: 8px; height: 4px; }
.group > header, .projects > header { padding-top: 3px; }
.group h2 { margin-top: 2px; }

.log { margin-top: auto; padding: 0 0 13px 8px; display: grid; gap: 8px; font: 500 5px/7px "Noto Sans", sans-serif; white-space: nowrap; position: relative; }
.log p + p { padding-left: 4px; }
.log b { color: #e6e600; font-weight: 500; }
.log i { color: #00d21e; }

/* Organisation diagram */
.canvas { position: absolute; inset: 0 0 7px; overflow: hidden; font-family: Roboto, sans-serif; }
.wires { position: absolute; left: 0; top: 0; width: 472px; height: 231px; }
.node { position: absolute; width: 56px; }
.node h3 { padding-left: 7px; font-size: 5px; line-height: 8px; font-weight: 500; white-space: nowrap; color: #00a2e8; }
.node svg { width: 12px; height: 19px; margin-left: 17px; }
.node .house { width: 24px; height: 17px; margin: 0 0 2px 11px; }
.node p { display: grid; grid-template-columns: 28px 28px; grid-auto-rows: 8px; height: 16px; padding-left: 2px; background: #161616; font-size: 5px; line-height: 8px; font-weight: 500; white-space: nowrap; }
.node b { font-weight: 700; }
.node i { color: #00d21e; }
.node em { color: #d00000; }
.node span { color: #999; }
.n-hr { left: 305px; top: 53px; }
.n-sales { left: 391px; top: 38px; }
.n-account { left: 458px; top: 77px; }
.n-root { left: 324px; top: 120px; }
.n-tech { left: 450px; top: 129px; }
.n-it { left: 264px; top: 145px; }
.n-guard { left: 339px; top: 203px; }
.n-trade { left: 424px; top: 180px; }

/* News */
.news ul { display: grid; grid-auto-rows: 12%; height: 213px; margin-top: 5px; overflow: hidden; }
.news li { display: flex; padding-left: 6px; color: #00e61e; }
.news li > svg { width: 5px; height: 6px; margin-top: 3px; }
.news li div { flex: none; width: 142px; margin-left: 2px; border-bottom: 1px solid #0c5c26; padding: 4px 0 0 2px; }
.news a { display: block; font: 500 5px/8px "Noto Sans", sans-serif; white-space: nowrap; }
.news time { display: flex; align-items: center; gap: 1px; font-size: 5px; line-height: 7px; color: #2f74b5; margin-left: -2px; }
.news time svg { width: 5px; height: 5px; }

/* Projects */
.projects dl { padding: 11px 0 0 7px; font-size: 5px; font-weight: 700; line-height: 8px; color: #00e61e; display: grid; gap: 17px; width: 101px; }
.projects dl div { display: flex; align-items: center; }
.projects svg { width: 8px; height: 8px; color: #1183e8; margin-right: 5px; }
.projects dd { margin-left: auto; }
.projects dt, .projects dd { white-space: nowrap; }

/* Phone body */
.phone { font-family: Inter, sans-serif; color: #111; }
.shell {
  position: relative;
  padding: 75px 17px;
  border: 2px solid;
  border-color: #3a3c40 #85888c #55585c;
  border-radius: 50px;
  background: #000;
  box-shadow: inset 0 0 0 3px #1d1f22, inset 0 0 0 5px #3e4246;
}
.shell::before {
  content: "";
  position: absolute;
  inset: 6px 6px auto;
  height: 400px;
  border-radius: 44px 44px 0 0;
  background: linear-gradient(#828282, #555 25%, #151515);
  clip-path: polygon(42% 0, 100% 0, 100% 100%, 52% 17%);
}
.side { position: absolute; left: -3px; width: 5px; border-radius: 3px 0 0 3px; background: linear-gradient(90deg, #222, #aaa 60%, #333); }
.s1 { top: 80px; height: 26px; }
.s2 { top: 134px; height: 18px; }
.s3 { top: 182px; height: 18px; }
.power { position: absolute; top: -2px; right: 48px; width: 46px; height: 4px; border-radius: 2px 2px 0 0; background: #333; }
.speaker { position: absolute; top: 21px; left: 0; right: 0; display: flex; flex-direction: column; align-items: center; gap: 11px; }
.speaker i { width: 11px; height: 11px; border-radius: 50%; background: radial-gradient(#2a3f8f 10%, #0a0f2c 35%, #333 70%); }
.speaker b { width: 53px; height: 12px; border-radius: 6px; background: linear-gradient(#0d0d0d, #444 55%, #111 65%, #999); }
.homekey { position: absolute; left: 50%; bottom: 15px; width: 53px; height: 51px; margin-left: -28px; border-radius: 50%; background: linear-gradient(#0a0a0a, #000 52%, #444 53%, #8a8a8a); display: grid; place-items: center; border-top: 1px solid #2a2a2a; }
.homekey i { width: 20px; height: 19px; border: 1px solid #ddd; border-radius: 5px; }

/* Phone app */
.app { position: relative; background: #fff; aspect-ratio: 247 / 414; overflow: hidden; display: flex; flex-direction: column; }
.apphead { display: grid; grid-template-columns: 26px 1fr 24px; align-items: start; text-align: center; height: 42px; padding-top: 15px; border-bottom: 1px solid #eee; flex: none; }
.menu { display: grid; gap: 2px; padding: 8px 0 0 11px; }
.menu i { width: 14px; height: 1px; background: #444; margin-bottom: 1px; }
.apphead h1 { font-size: 10px; line-height: 12px; font-weight: 700; }
.apphead small { font-size: 8px; color: #000080; }
.apphead p { display: flex; justify-content: center; gap: 1px; align-items: center; font-size: 8px; line-height: 9px; font-weight: 600; color: #000080; white-space: pre; }
.apphead p svg { width: 8px; height: 8px; }
.apphead p span { display: flex; gap: 1px; align-items: center; color: #008000; }
.apphead .yin { --alt: #9999cc; }
.apphead .id { --alt: #a9adbb; color: #435070; width: 10px; height: 10px; }
.apphead p b { color: #435070; font-weight: 600; }
.quick { display: grid; grid-template-columns: repeat(5, 1fr); padding: 4px 1px 0; height: 53px; flex: none; }
.quick a { position: relative; display: flex; flex-direction: column; align-items: center; gap: 4px; font-size: 10px; line-height: 12px; text-decoration: underline; white-space: nowrap; }
.quick > a > svg { width: 26px; height: 25px; color: var(--ink); }
.quick > a > .wide { width: 30px; }
.quick .low { padding-top: 2px; }
.badge { position: absolute; right: 2px; top: -2px; width: 13px; height: 13px; border-radius: 50%; background: #b30000; color: #fff; display: grid; place-items: center; }
.badge svg { width: 8px; height: 8px; }
.status { display: grid; grid-template-columns: 1fr 1fr; gap: 10px; padding: 0 5px; flex: none; }
.status button { height: 17px; border-radius: 3px; font-size: 10px; line-height: 17px; white-space: nowrap; }
.clock { background: #001f3f; color: #00d21e; }
.orange { background: #ff8c00; }
.tiles { display: grid; grid-template-columns: repeat(3, 1fr); gap: 10px; padding: 5px 6px 0; flex: none; }
.tiles button { position: relative; display: flex; flex-direction: column; align-items: center; gap: 4px; height: 50px; padding-top: 7px; border: 1px solid #e4e4e4; box-shadow: 3px 2px 1px #ddd; font-size: 10px; line-height: 12px; white-space: nowrap; }
.tiles button > svg { width: 23px; height: 23px; color: var(--ink); }
.tiles button > .wide { width: 28px; }
.tiles .badge { right: 6px; top: 3px; }
.tasks { flex: 1; min-height: 0; overflow: hidden; padding: 0 8px; }
article { padding: 13px 0 3px 5px; border-bottom: 1px dashed #ccc; font-size: 10px; line-height: 25px; }
article header { display: flex; justify-content: space-between; align-items: center; height: 20px; padding-right: 5px; }
article h2 { font-size: 10px; line-height: 20px; font-weight: 700; }
article button { width: 10px; height: 10px; background: linear-gradient(#27365c, #27365c) center / 10px 2px no-repeat, linear-gradient(#27365c, #27365c) center / 2px 10px no-repeat; }
article p { display: flex; align-items: center; gap: 5px; }
article p svg { width: 9px; height: 9px; color: var(--ink); }
article .state { line-height: 20px; margin-bottom: 3px; }
article time { color: #1d6b3c; margin-left: -3px; }
mark { background: #5bbd48; color: #123c12; font-size: 7px; line-height: 11px; padding: 0 3px; border-radius: 6px; margin-left: -2px; }
mark + mark { margin-left: 1px; }
.dock { flex: none; display: grid; grid-template-columns: repeat(5, 1fr); justify-items: center; height: 34px; padding: 5px 0 0; background: #fff; border-top: 1px solid #ccc; border-radius: 14px 14px 0 0; }
.dock svg { width: 26px; height: 25px; color: var(--ink); }
.dock .grip i { display: block; width: 15px; height: 7px; margin-top: 2px; border: solid #111; border-width: 2px 0; }
```
